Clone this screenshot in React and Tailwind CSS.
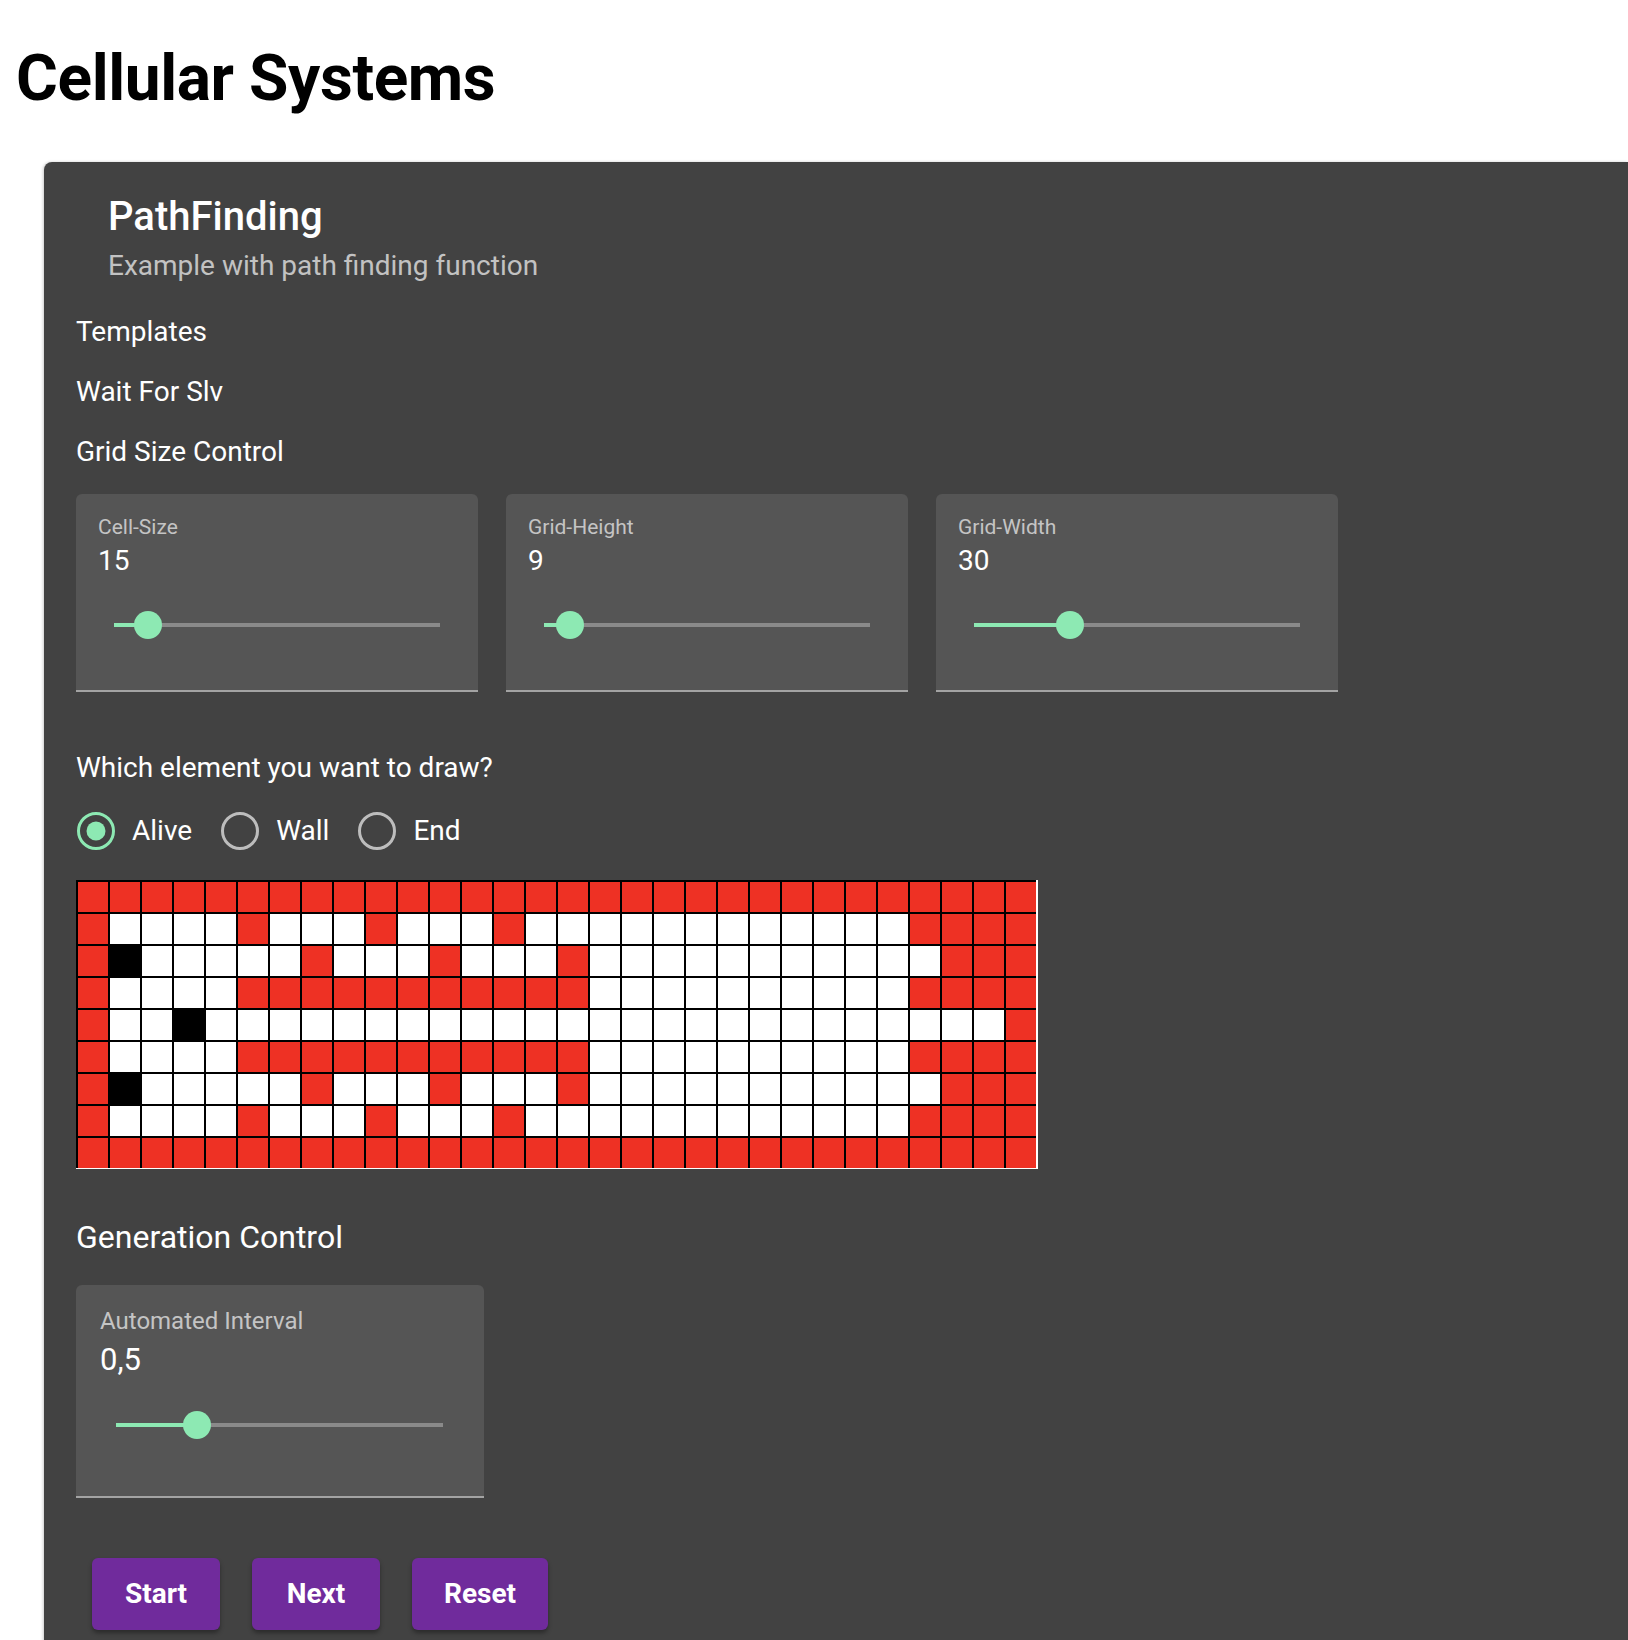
import React from "react";

const ROWS = [
  "RRRRRRRRRRRRRRRRRRRRRRRRRRRRRR",
  "RWWWWRWWWRWWWRWWWWWWWWWWWWRRRR",
  "RBWWWWWRWWWRWWWRWWWWWWWWWWWRRR",
  "RWWWWRRRRRRRRRRRWWWWWWWWWWRRRR",
  "RWWBWWWWWWWWWWWWWWWWWWWWWWWWWR",
  "RWWWWRRRRRRRRRRRWWWWWWWWWWRRRR",
  "RBWWWWWRWWWRWWWRWWWWWWWWWWWRRR",
  "RWWWWRWWWRWWWRWWWWWWWWWWWWRRRR",
  "RRRRRRRRRRRRRRRRRRRRRRRRRRRRRR",
];

function Slider({ pct, cls }) {
  return (
    <div className={`relative h-[28px] ${cls}`}>
      <div className="absolute left-0 right-0 top-[12px] h-[4px] bg-[#8a8a8a]" />
      <div
        className="absolute left-0 top-[12px] h-[4px] bg-[#8de9b3]"
        style={{ width: pct + "%" }}
      />
      <div
        className="absolute top-0 h-[28px] w-[28px] -ml-[14px] rounded-full bg-[#8de9b3]"
        style={{ left: pct + "%" }}
      />
    </div>
  );
}

function GridCard({ label, value, pct }) {
  return (
    <div className="w-[402px] h-[198px] rounded-t-[6px] bg-[#555555] border-b-2 border-[#a3a3a3] pt-[17px]">
      <div className="pl-[22px] text-[21px] leading-[32px] text-[#c4c4c4]">{label}</div>
      <div className="pl-[22px] text-[28px] leading-[36px] text-white">{value}</div>
      <Slider pct={pct} cls="mx-[38px] mt-[32px]" />
    </div>
  );
}

function Radio({ checked, label }) {
  return (
    <div className="flex items-center">
      <svg width="40" height="40" viewBox="0 0 40 40">
        <circle cx="20" cy="20" r="17.5" fill="none" stroke={checked ? "#8de9b3" : "#bdbdbd"} strokeWidth="3" />
        {checked && <circle cx="20" cy="20" r="9.5" fill="#8de9b3" />}
      </svg>
      <span className="ml-[16px] text-[28px] text-white">{label}</span>
    </div>
  );
}

export default function App() {
  return (
    <div className="min-h-[1640px] bg-white font-['Roboto','Liberation_Sans',sans-serif] overflow-hidden">
      <h1 className="pl-[16px] pt-[40px] text-[64px] leading-[78px] font-bold text-black tracking-[-0.4px]">
        Cellular Systems
      </h1>
      <div className="ml-[44px] mt-[44px] h-[1500px] rounded-tl-[8px] bg-[#424242] pl-[32px] shadow-[-1px_0_3px_rgba(0,0,0,0.2)]">
        <div className="pl-[32px] pt-[30px]">
          <div className="text-[40px] leading-[50px] font-medium text-white">PathFinding</div>
          <div className="mt-[4px] text-[28px] leading-[40px] text-[#c2c2c2]">Example with path finding function</div>
        </div>
        <div className="mt-[26px] text-[28px] leading-[40px] text-white">Templates</div>
        <div className="mt-[20px] text-[28px] leading-[40px] text-white">Wait For Slv</div>
        <div className="mt-[20px] text-[28px] leading-[40px] text-white">Grid Size Control</div>
        <div className="mt-[22px] flex gap-[28px]">
          <GridCard label="Cell-Size" value="15" pct={10.5} />
          <GridCard label="Grid-Height" value="9" pct={8} />
          <GridCard label="Grid-Width" value="30" pct={29.5} />
        </div>
        <div className="mt-[56px] text-[28px] leading-[40px] text-white">Which element you want to draw?</div>
        <div className="mt-[22px] flex items-center gap-[28px]">
          <Radio checked label="Alive" />
          <Radio label="Wall" />
          <Radio label="End" />
        </div>
        <div className="mt-[28px] inline-block border-r-2 border-b border-white">
          {ROWS.map((row, r) => (
            <div key={r} className="flex">
              {row.split("").map((c, i) => (
                <div
                  key={i}
                  className={`h-[32px] w-[32px] border-l-2 border-t-2 border-black ${
                    c === "R" ? "bg-[#ee3124]" : c === "B" ? "bg-black" : "bg-white"
                  }`}
                />
              ))}
            </div>
          ))}
        </div>
        <div className="mt-[40px] text-[32px] leading-[44px] text-white">Generation Control</div>
        <div className="mt-[26px] w-[408px] h-[213px] rounded-t-[6px] bg-[#555555] border-b-2 border-[#a3a3a3] pt-[18px]">
          <div className="pl-[24px] text-[24px] leading-[36px] text-[#c4c4c4]">Automated Interval</div>
          <div className="mt-[1px] pl-[24px] text-[31px] leading-[40px] text-white">0,5</div>
          <Slider pct={24.8} cls="ml-[40px] mr-[41px] mt-[31px]" />
        </div>
        <div className="mt-[60px] ml-[16px] flex gap-[32px]">
          <button className="h-[72px] w-[128px] rounded-[6px] bg-[#702b9c] text-[28px] font-bold text-white shadow-[0_3px_4px_rgba(0,0,0,0.35)]">Start</button>
          <button className="h-[72px] w-[128px] rounded-[6px] bg-[#702b9c] text-[28px] font-bold text-white shadow-[0_3px_4px_rgba(0,0,0,0.35)]">Next</button>
          <button className="h-[72px] w-[136px] rounded-[6px] bg-[#702b9c] text-[28px] font-bold text-white shadow-[0_3px_4px_rgba(0,0,0,0.35)]">Reset</button>
        </div>
      </div>
    </div>
  );
}
